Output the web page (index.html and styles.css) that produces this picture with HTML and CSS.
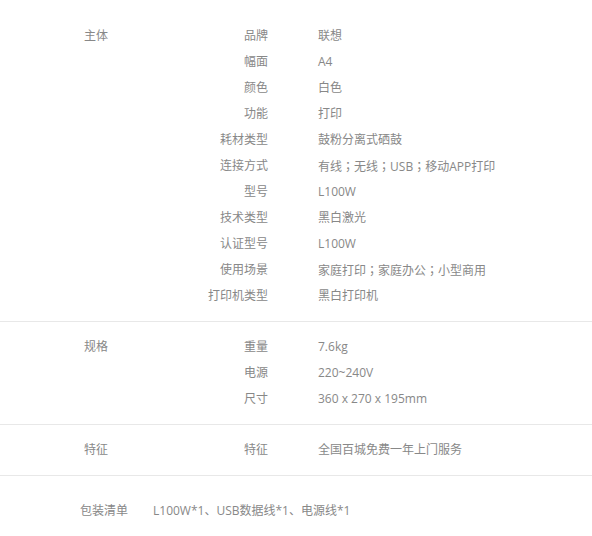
FILE: index.html
```html
<!DOCTYPE html>
<html lang="zh-CN">
<head>
    <meta charset="UTF-8">
    <title>规格参数</title>
    <link rel="stylesheet" href="styles.css">
</head>
<body>
    <div class="spec-container">
        <!-- 主体 -->
        <div class="spec-group">
            <div class="group-name">主体</div>
            <div class="group-rows">
                <div class="spec-row"><span class="spec-label">品牌</span><span class="spec-value">联想</span></div>
                <div class="spec-row"><span class="spec-label">幅面</span><span class="spec-value">A4</span></div>
                <div class="spec-row"><span class="spec-label">颜色</span><span class="spec-value">白色</span></div>
                <div class="spec-row"><span class="spec-label">功能</span><span class="spec-value">打印</span></div>
                <div class="spec-row"><span class="spec-label">耗材类型</span><span class="spec-value">鼓粉分离式硒鼓</span></div>
                <div class="spec-row"><span class="spec-label">连接方式</span><span class="spec-value">有线<span class="sep" lang="zh-TW">；</span>无线<span class="sep" lang="zh-TW">；</span>USB<span class="sep" lang="zh-TW">；</span>移动APP打印</span></div>
                <div class="spec-row"><span class="spec-label">型号</span><span class="spec-value">L100W</span></div>
                <div class="spec-row"><span class="spec-label">技术类型</span><span class="spec-value">黑白激光</span></div>
                <div class="spec-row"><span class="spec-label">认证型号</span><span class="spec-value">L100W</span></div>
                <div class="spec-row"><span class="spec-label">使用场景</span><span class="spec-value">家庭打印<span class="sep" lang="zh-TW">；</span>家庭办公<span class="sep" lang="zh-TW">；</span>小型商用</span></div>
                <div class="spec-row"><span class="spec-label">打印机类型</span><span class="spec-value">黑白打印机</span></div>
            </div>
        </div>

        <!-- 规格 -->
        <div class="spec-group">
            <div class="group-name">规格</div>
            <div class="group-rows">
                <div class="spec-row"><span class="spec-label">重量</span><span class="spec-value">7.6kg</span></div>
                <div class="spec-row"><span class="spec-label">电源</span><span class="spec-value">220~240V</span></div>
                <div class="spec-row"><span class="spec-label">尺寸</span><span class="spec-value">360 x 270 x 195mm</span></div>
            </div>
        </div>

        <!-- 特征 -->
        <div class="spec-group">
            <div class="group-name">特征</div>
            <div class="group-rows">
                <div class="spec-row"><span class="spec-label">特征</span><span class="spec-value">全国百城免费一年上门服务</span></div>
            </div>
        </div>

        <!-- 包装清单 -->
        <div class="package-list">
            <span class="package-label">包装清单</span>
            <span class="package-value">L100W*1、USB数据线*1、电源线*1</span>
        </div>
    </div>
</body>
</html>
```

FILE: styles.css
```css
body {
    font-family: "Open Sans", "Noto Sans CJK SC", sans-serif;
    font-size: 12px;
    color: #888;
    margin: 0;
    padding: 0;
    background-color: #ffffff;
}
.spec-container {
    padding-top: 11px;
}
.spec-group {
    display: flex;
    padding: 12px 0;
    border-bottom: 1px solid #e8e8e8;
}
.group-name {
    width: 100px;
    height: 26px;
    padding-left: 84px;
    line-height: 26px;
}
.group-rows {
    flex: 1;
}
.spec-row {
    display: flex;
    align-items: center;
    height: 26px;
    line-height: 26px;
}
.spec-label {
    width: 84px;
    text-align: right;
}
.spec-value {
    margin-left: 50px;
}
/* 全角分号居中显示 */
.sep {
    font-family: "Noto Sans CJK TC", sans-serif;
}
.package-list {
    display: flex;
    align-items: center;
    gap: 25px;
    height: 22px;
    padding: 24px 0 0 80px;
    line-height: 22px;
}
```
